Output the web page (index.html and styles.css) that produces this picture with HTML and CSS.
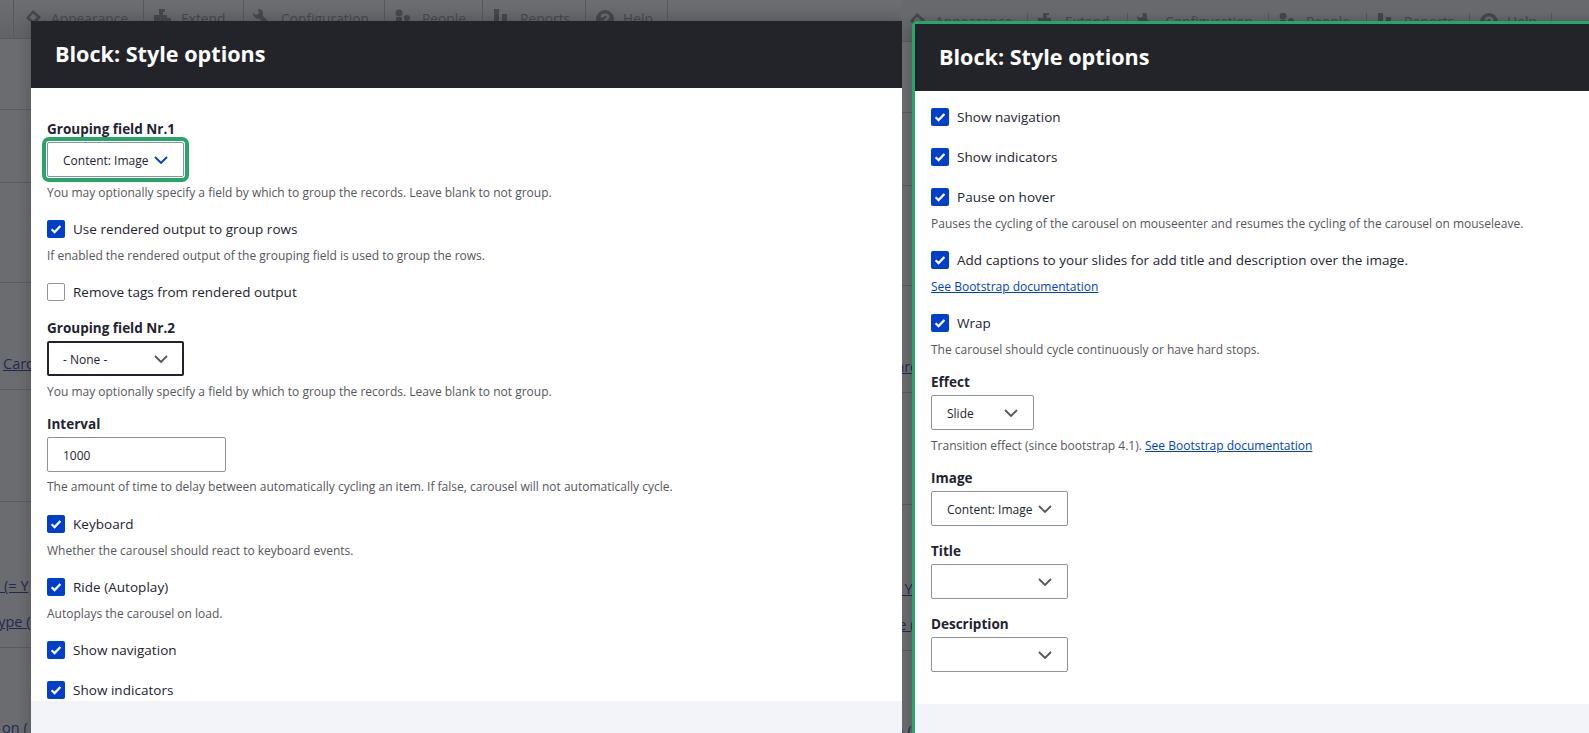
FILE: index.html
```html
<!DOCTYPE html>
<html lang="en">
<head>
<meta charset="utf-8">
<title>Block: Style options</title>
<link rel="stylesheet" href="styles.css">
</head>
<body>
<svg class="defs" width="0" height="0" aria-hidden="true">
  <symbol id="tick" viewBox="0 0 18 18"><path d="M4.6 9.2l3 2.9 5.8-6.2" fill="none" stroke="#fff" stroke-width="2.2"/></symbol>
  <symbol id="chev" viewBox="0 0 14 9"><path d="M1 1l6 6 6-6" fill="none" stroke="currentColor" stroke-width="1.8"/></symbol>
  <symbol id="i-app" viewBox="0 0 20 20"><path d="M10 1l8 7-7 8-8-7z M10 4.500L6.500 8.500l4 3.500 3.500-4z" fill="#47484c" fill-rule="evenodd"/></symbol>
  <symbol id="i-ext" viewBox="0 0 20 20"><path d="M6 0h6v3h-2v3h4v3h4v4H1V6h5V3H6z" fill="#47484c"/></symbol>
  <symbol id="i-conf" viewBox="0 0 20 20"><path d="M5 0c3 0 5 1.500 5 4 0 1 0 2-.5 2.500L16 13l-3 4-6.500-7C3 10 0 8 0 4l3 2 3-1.500z" fill="#47484c"/></symbol>
  <symbol id="i-peo" viewBox="0 0 20 20"><circle cx="5" cy="4" r="3.500" fill="#47484c"/><path d="M2 8h6v10H2z" fill="#47484c"/><circle cx="13" cy="9" r="3" fill="#47484c"/><path d="M10 12h7v8h-7z" fill="#47484c"/></symbol>
  <symbol id="i-rep" viewBox="0 0 20 20"><path d="M2 0h5v20H2zM10 5h5v15h-5z" fill="#47484c"/></symbol>
  <symbol id="i-help" viewBox="0 0 20 20"><path d="M10 1a9 9 0 1 0 0 18 9 9 0 0 0 0-18zm0 3.500c3 0 4.500 1.500 4.500 3.500 0 2-3 3-3 4.500h-3c0-2.500 3-3 3-4.500 0-.5-.5-1-1.500-1s-1.500.5-1.500 1.500h-3c0-2.500 1.500-4 4.500-4z" fill="#47484c" fill-rule="evenodd"/></symbol>
</svg>

<main class="stage">

  <section class="shot shot-left">
    <div class="backdrop">
      <nav class="toolbar">
        <span class="tool tool-app"><svg class="tool-icon"><use href="#i-app"/></svg>Appearance</span>
        <span class="tool tool-ext"><svg class="tool-icon"><use href="#i-ext"/></svg>Extend</span>
        <span class="tool tool-conf"><svg class="tool-icon"><use href="#i-conf"/></svg>Configuration</span>
        <span class="tool tool-peo"><svg class="tool-icon"><use href="#i-peo"/></svg>People</span>
        <span class="tool tool-rep"><svg class="tool-icon"><use href="#i-rep"/></svg>Reports</span>
        <span class="tool tool-help"><svg class="tool-icon"><use href="#i-help"/></svg>Help</span>
      </nav>
      <div class="row row-a"></div>
      <div class="row row-b"></div>
      <div class="row row-c"></div>
      <div class="row row-d"><a class="under-link link-card">Card</a></div>
      <div class="row row-e"></div>
      <div class="row row-f"><a class="under-link link-yes">1 (= Y</a><a class="under-link link-type">type (</a></div>
      <div class="row row-g"><a class="under-link link-on">on (</a></div>
    </div>

    <div class="modal">
      <h2 class="modal-title">Block: Style options</h2>
      <div class="modal-body">
        <div class="item item-first">
          <label class="field-label">Grouping field Nr.1</label>
          <div class="select select-wide select-focus"><span>Content: Image</span><svg class="chev chev-blue"><use href="#chev"/></svg></div>
          <p class="desc desc-tight">You may optionally specify a field by which to group the records. Leave blank to not group.</p>
        </div>
        <div class="item">
          <div class="check"><span class="box"><svg class="tick"><use href="#tick"/></svg></span>Use rendered output to group rows</div>
          <p class="desc">If enabled the rendered output of the grouping field is used to group the rows.</p>
        </div>
        <div class="item">
          <div class="check"><span class="box box-off"></span>Remove tags from rendered output</div>
        </div>
        <div class="item item-18">
          <label class="field-label">Grouping field Nr.2</label>
          <div class="select select-wide select-dark"><span>- None -</span><svg class="chev"><use href="#chev"/></svg></div>
          <p class="desc desc-tight">You may optionally specify a field by which to group the records. Leave blank to not group.</p>
        </div>
        <div class="item item-15">
          <label class="field-label">Interval</label>
          <div class="input">1000</div>
          <p class="desc desc-5">The amount of time to delay between automatically cycling an item. If false, carousel will not automatically cycle.</p>
        </div>
        <div class="item item-20">
          <div class="check"><span class="box"><svg class="tick"><use href="#tick"/></svg></span>Keyboard</div>
          <p class="desc">Whether the carousel should react to keyboard events.</p>
        </div>
        <div class="item">
          <div class="check"><span class="box"><svg class="tick"><use href="#tick"/></svg></span>Ride (Autoplay)</div>
          <p class="desc">Autoplays the carousel on load.</p>
        </div>
        <div class="item">
          <div class="check"><span class="box"><svg class="tick"><use href="#tick"/></svg></span>Show navigation</div>
        </div>
        <div class="item item-22">
          <div class="check"><span class="box"><svg class="tick"><use href="#tick"/></svg></span>Show indicators</div>
        </div>
      </div>
      <div class="modal-foot"></div>
    </div>
  </section>

  <section class="shot shot-right">
    <div class="backdrop">
      <nav class="toolbar">
        <span class="tool tool-app"><svg class="tool-icon"><use href="#i-app"/></svg>Appearance</span>
        <span class="tool tool-ext"><svg class="tool-icon"><use href="#i-ext"/></svg>Extend</span>
        <span class="tool tool-conf"><svg class="tool-icon"><use href="#i-conf"/></svg>Configuration</span>
        <span class="tool tool-peo"><svg class="tool-icon"><use href="#i-peo"/></svg>People</span>
        <span class="tool tool-rep"><svg class="tool-icon"><use href="#i-rep"/></svg>Reports</span>
        <span class="tool tool-help"><svg class="tool-icon"><use href="#i-help"/></svg>Help</span>
      </nav>
      <div class="row row-a"></div>
      <div class="row row-b"></div>
      <div class="row row-c"></div>
      <div class="row row-d"><a class="under-link link-card">Card</a></div>
      <div class="row row-e"></div>
      <div class="row row-f"><a class="under-link link-yes">1 (= Y</a><a class="under-link link-type">type (</a></div>
      <div class="row row-g"><a class="under-link link-on">on (</a></div>
    </div>

    <div class="modal modal-active">
      <h2 class="modal-title">Block: Style options</h2>
      <div class="modal-body modal-body-right">
        <div class="item item-first">
          <div class="check"><span class="box"><svg class="tick"><use href="#tick"/></svg></span>Show navigation</div>
        </div>
        <div class="item item-22">
          <div class="check"><span class="box"><svg class="tick"><use href="#tick"/></svg></span>Show indicators</div>
        </div>
        <div class="item item-22">
          <div class="check"><span class="box"><svg class="tick"><use href="#tick"/></svg></span>Pause on hover</div>
          <p class="desc">Pauses the cycling of the carousel on mouseenter and resumes the cycling of the carousel on mouseleave.</p>
        </div>
        <div class="item">
          <div class="check"><span class="box"><svg class="tick"><use href="#tick"/></svg></span>Add captions to your slides for add title and description over the image.</div>
          <p class="desc"><a class="doc-link">See Bootstrap documentation</a></p>
        </div>
        <div class="item">
          <div class="check"><span class="box"><svg class="tick"><use href="#tick"/></svg></span>Wrap</div>
          <p class="desc">The carousel should cycle continuously or have hard stops.</p>
        </div>
        <div class="item item-15">
          <label class="field-label">Effect</label>
          <div class="select select-narrow"><span>Slide</span><svg class="chev"><use href="#chev"/></svg></div>
          <p class="desc desc-tight">Transition effect (since bootstrap 4.1). <a class="doc-link">See Bootstrap documentation</a></p>
        </div>
        <div class="item item-15">
          <label class="field-label">Image</label>
          <div class="select select-wide"><span>Content: Image</span><svg class="chev"><use href="#chev"/></svg></div>
        </div>
        <div class="item item-16">
          <label class="field-label">Title</label>
          <div class="select select-wide"><span></span><svg class="chev"><use href="#chev"/></svg></div>
        </div>
        <div class="item item-16">
          <label class="field-label">Description</label>
          <div class="select select-wide"><span></span><svg class="chev"><use href="#chev"/></svg></div>
        </div>
      </div>
      <div class="modal-foot"></div>
    </div>
  </section>

</main>
</body>
</html>
```

FILE: styles.css
```css
* { box-sizing: border-box; }

html, body {
  margin: 0;
  height: 733px;
  overflow: hidden;
}

body {
  background: #68696d;
  font-family: "Open Sans", "Noto Sans", "Liberation Sans", sans-serif;
  color: #222330;
}

.defs { display: block; height: 0; }

.stage {
  display: flex;
  height: 733px;
}

/* Each half of the reference is its own page capture */
.shot {
  position: relative;
  overflow: hidden;
}
.shot-left { width: 902px; flex: none; height: 733px; padding: 21px 0 0 31px; }
.shot-right { flex: 1; height: 720px; margin-top: 13px; padding: 8px 0 0 10px; }

.backdrop {
  position: absolute;
  left: 0;
  top: 0;
  width: 1000px;
  background: #6b6c70;
}
.shot-right .backdrop { left: -18px; top: -10px; }

.toolbar {
  display: flex;
  height: 39px;
  padding-left: 13px;
  background: linear-gradient(#6d6e72, #616266);
  border-bottom: 1px solid #58595d;
  font-size: 13.8px;
  color: #47484c;
  line-height: 40px;
}
.tool {
  display: flex;
  align-items: center;
  border-left: 1px solid #57585c;
  padding-left: 9px;
  gap: 8px;
}
.tool-icon { width: 20px; height: 20px; flex: none; }
.tool-app { width: 130px; }
.tool-ext { width: 100px; }
.tool-conf { width: 141px; }
.tool-peo { width: 98px; }
.tool-rep { width: 103px; }
.tool-help { width: 83px; border-right: 1px solid #57585c; }

.row {
  display: flex;
  flex-direction: column;
  justify-content: flex-end;
  align-items: flex-start;
  border-bottom: 1px solid #5a5b5f;
  font-size: 14.5px;
  line-height: 20px;
}
.row-a { height: 71px; }
.row-b { height: 73px; }
.row-c { height: 100px; }
.row-d { height: 107px; padding-bottom: 15px; }
.row-e { height: 112px; }
.row-f { height: 146px; padding-bottom: 15px; gap: 16px; }
.row-g { height: 90px; padding-bottom: 0; border-bottom: 0; }

.under-link {
  color: #1f2a52;
  text-decoration: underline;
  white-space: nowrap;
}
.link-card { padding-left: 3px; }
.link-yes { margin-left: -8px; }
.link-type { margin-left: -7px; }
.link-on { margin-left: 2px; }

.modal {
  position: relative;
  width: 871px;
  background: #fff;
  box-shadow: 0 0 14px rgba(0, 0, 0, .22);
}
.modal-active {
  width: 800px;
  border-left: 3px solid #26a769;
  border-top: 3px solid #26a769;
  border-top-left-radius: 5px;
}

.modal-title {
  margin: 0;
  height: 67px;
  padding-left: 24px;
  background: #232429;
  color: #fff;
  font-size: 21.6px;
  font-weight: 700;
  line-height: 66px;
}

.modal-body {
  height: 613px;
  padding: 32px 16px 0;
  overflow: hidden;
}
.modal-body-right { padding-top: 17px; }

.modal-foot {
  height: 40px;
  background: #f3f4f9;
}

.item { margin-top: 19px; }
.item-first { margin-top: 0; }
.item-22 { margin-top: 22px; }
.item-20 { margin-top: 20px; }
.item-18 { margin-top: 18px; }
.item-16 { margin-top: 16px; }
.item-15 { margin-top: 15px; }

.field-label {
  display: block;
  margin-bottom: 4px;
  font-size: 13.5px;
  font-weight: 700;
  line-height: 18px;
}

.check {
  display: flex;
  align-items: center;
  height: 18px;
  font-size: 13.5px;
  line-height: 18px;
  letter-spacing: .03px;
  white-space: nowrap;
}
.box {
  flex: none;
  width: 18px;
  height: 18px;
  margin-right: 8px;
  border-radius: 2px;
  background: #003ecc;
}
.box-off {
  background: #fff;
  border: 1px solid #919297;
}
.tick { display: block; width: 18px; height: 18px; }

.desc {
  height: 18px;
  margin: 8px 0 0;
  padding-top: 1px;
  font-size: 12px;
  line-height: 18px;
  color: #55565b;
  white-space: nowrap;
}
.desc-tight { margin-top: 6px; }
.desc-5 { margin-top: 5px; }

.doc-link {
  color: #003ecc;
  text-decoration: underline;
}

.select {
  display: flex;
  align-items: center;
  justify-content: space-between;
  height: 35px;
  padding: 1px 15px 0 15px;
  border: 1px solid #8e929c;
  border-radius: 2px;
  background: #fff;
  font-size: 12px;
}
.select-wide { width: 137px; }
.select-narrow { width: 103px; padding-right: 15px; }
.select-focus {
  outline: 4px solid #26a769;
  outline-offset: 1px;
}
.select-dark {
  border: 2px solid #222330;
  padding-left: 14px;
  padding-right: 14px;
}
.chev {
  flex: none;
  width: 14px;
  height: 9px;
  color: #55565b;
}
.chev-blue { color: #003ecc; }

.input {
  display: flex;
  align-items: center;
  width: 179px;
  height: 35px;
  padding: 1px 0 0 15px;
  border: 1px solid #8e929c;
  border-radius: 2px;
  font-size: 12px;
}
```
